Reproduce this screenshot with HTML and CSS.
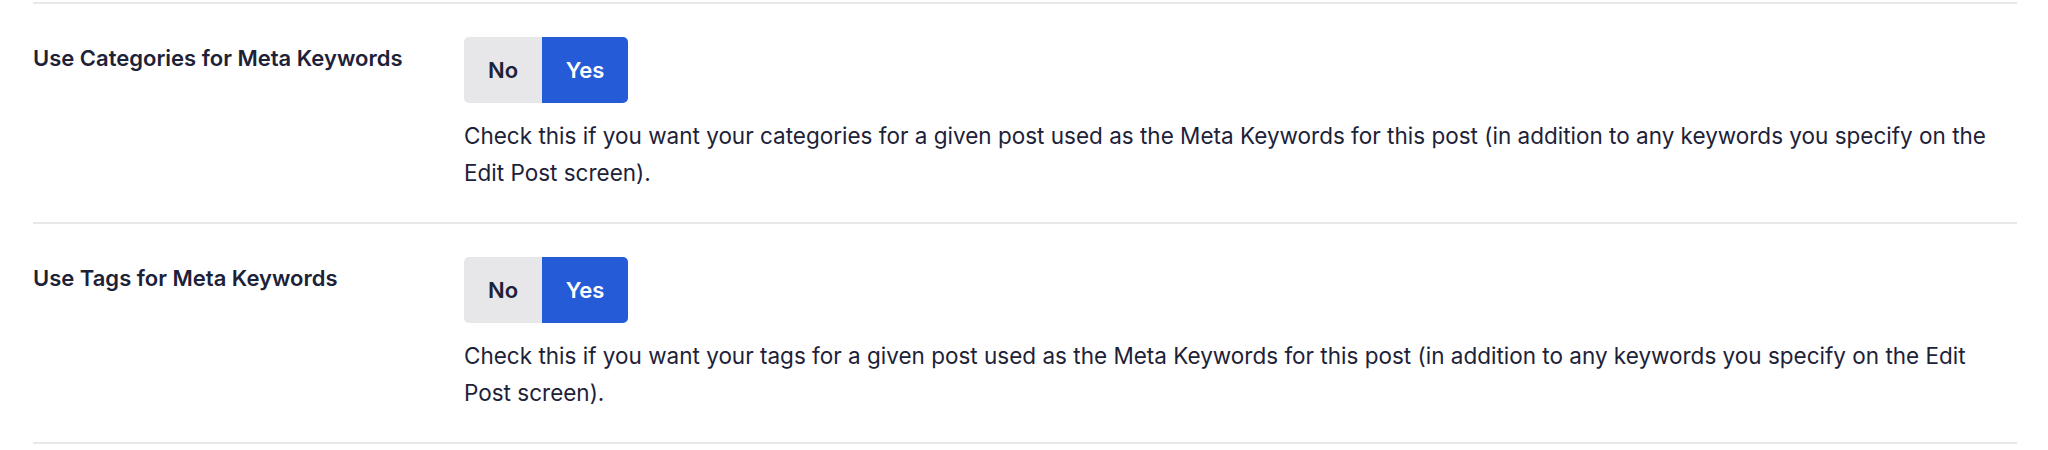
FILE: index.html
```html
<!DOCTYPE html>
<html lang="en">
<head>
<meta charset="utf-8">
<title>Meta Keywords Settings</title>
<link rel="stylesheet" href="styles.css">
</head>
<body>
<div class="settings">
  <div class="row">
    <div class="label">Use Categories for Meta Keywords</div>
    <div class="control">
      <div class="toggle">
        <span class="opt opt-no">No</span>
        <span class="opt opt-yes">Yes</span>
      </div>
      <p class="desc">Check this if you want your categories for a given post used as the Meta Keywords for this post (in addition to any keywords you specify on the Edit Post screen).</p>
    </div>
  </div>
  <div class="row">
    <div class="label">Use Tags for Meta Keywords</div>
    <div class="control">
      <div class="toggle">
        <span class="opt opt-no">No</span>
        <span class="opt opt-yes">Yes</span>
      </div>
      <p class="desc">Check this if you want your tags for a given post used as the Meta Keywords for this post (in addition to any keywords you specify on the Edit Post screen).</p>
    </div>
  </div>
  <div class="end"></div>
</div>
</body>
</html>
```

FILE: styles.css
```css
html, body {
  margin: 0;
  padding: 0;
  background: #ffffff;
}
body {
  font-family: Inter, "Noto Sans", "Liberation Sans", sans-serif;
  color: #1d2238;
}
.settings {
  padding: 2px 0 0 33px;
  width: 1984px;
}
.row {
  display: grid;
  grid-template-columns: 431px 1fr;
  border-top: 2px solid #e8e8ea;
  padding: 33px 0 31px;
}
.label {
  font-size: 22px;
  font-weight: 600;
  line-height: 30px;
  padding-top: 6px;
  color: #1d2238;
}
.control {
  display: flex;
  flex-direction: column;
  align-items: flex-start;
}
.toggle {
  display: flex;
  height: 66px;
  border-radius: 5px;
  overflow: hidden;
}
.opt {
  display: flex;
  align-items: center;
  justify-content: center;
  font-size: 22px;
  font-weight: 600;
}
.opt-no {
  width: 78px;
  background: #e7e7ea;
  color: #1d2238;
}
.opt-yes {
  width: 86px;
  background: #265bd8;
  color: #ffffff;
}
.desc {
  margin: 14px 0 0;
  font-size: 22.5px;
  line-height: 37px;
  color: #1d2238;
}
.end {
  border-top: 2px solid #e8e8ea;
}
```
